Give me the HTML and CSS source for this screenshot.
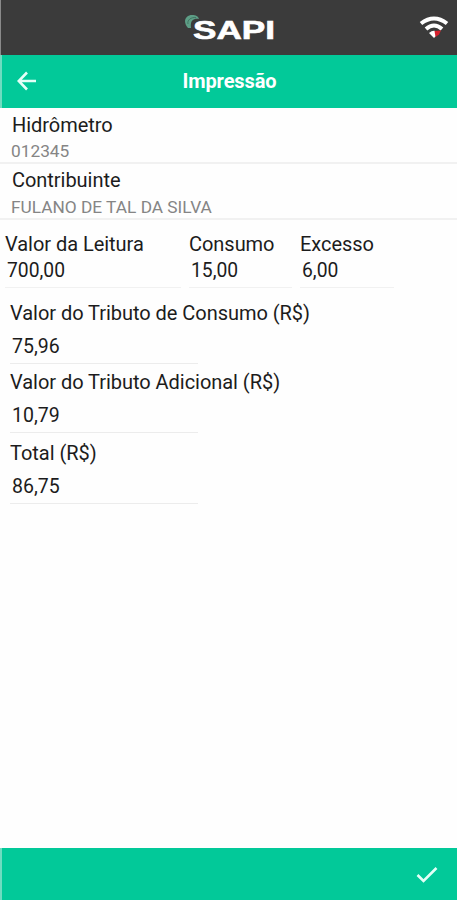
FILE: index.html
```
<!DOCTYPE html>
<html lang="pt-BR">
<head>
  <meta charset="UTF-8">
  <meta name="viewport" content="width=device-width, initial-scale=1.0">
  <title>SAPI - Impressão</title>
  <link rel="stylesheet" href="styles.css">
</head>
<body>

  <header class="topbar">
    <svg class="logo" width="96" height="34" viewBox="0 0 96 34">
      <path d="M5 18 C-1 11 3 5 9 5 C13 5 15 6 16 9 C10 8 7 11 8 18 Z" fill="#5d9e86"/>
      <path d="M5 14 C4 10 8 7 13 7.5" fill="none" stroke="#3b6b5a" stroke-width="0.8"/>
      <text class="logo-text" x="10" y="29" textLength="82" lengthAdjust="spacingAndGlyphs">SAPI</text>
    </svg>
    <svg class="wifi" width="30" height="24" viewBox="0 0 30 24">
      <path d="M2 7.5 Q15 -2.5 28 7.5" fill="none" stroke="#fff" stroke-width="4"/>
      <path d="M7 13 Q15 6 23 13" fill="none" stroke="#fff" stroke-width="4"/>
      <path d="M10 17 Q15 12.5 20 17 L15 22 Z" fill="#fff"/>
      <path d="M15.5 15 L22 14.5 L20 18.5 L16.5 21 Z" fill="#d5202c"/>
    </svg>
  </header>

  <nav class="titlebar">
    <svg class="back" width="20" height="20" viewBox="0 0 20 20">
      <path d="M19 10 H2 M10 1.5 L1.7 10 L10 18.5"/>
    </svg>
    <h1>Impressão</h1>
  </nav>

  <main>
    <div class="info">
      <label>Hidrômetro</label>
      <p>012345</p>
    </div>
    <div class="info contribuinte">
      <label>Contribuinte</label>
      <p>FULANO DE TAL DA SILVA</p>
    </div>

    <div class="leitura">
      <div class="campo">
        <label>Valor da Leitura</label>
        <p>700,00</p>
      </div>
      <div class="campo">
        <label>Consumo</label>
        <p>15,00</p>
      </div>
      <div class="campo">
        <label>Excesso</label>
        <p>6,00</p>
      </div>
    </div>

    <div class="valores">
      <div class="valor">
        <label>Valor do Tributo de Consumo (R$)</label>
        <p>75,96</p>
      </div>
      <div class="valor">
        <label>Valor do Tributo Adicional (R$)</label>
        <p>10,79</p>
      </div>
      <div class="valor total">
        <label>Total (R$)</label>
        <p>86,75</p>
      </div>
    </div>
  </main>

  <footer class="bottombar">
    <svg class="check" width="22" height="18" viewBox="0 0 22 18">
      <path d="M1.5 9 L7.5 15 L20.5 2"/>
    </svg>
  </footer>

</body>
</html>
```
FILE: styles.css
```
* {
  box-sizing: border-box;
}

body {
  margin: 0;
  height: 100vh;
  display: flex;
  flex-direction: column;
  font-family: Roboto, sans-serif;
  background: #fefefe;
  color: #1c1c1c;
}

h1, p {
  margin: 0;
}

label {
  display: block;
  white-space: nowrap;
  font-size: 20px;
  line-height: 24px;
  letter-spacing: -0.04px;
}

.topbar {
  height: 55px;
  display: flex;
  align-items: center;
  justify-content: flex-end;
  background: #3b3b3b;
  border-left: 1px solid #8a8a8a;
}

.logo {
  margin: 0 140px 2px 0;
}

.logo-text {
  font-family: "Liberation Sans", sans-serif;
  font-size: 25px;
  font-weight: bold;
  fill: #fff;
  stroke: #fff;
  stroke-width: 0.6px;
}

.wifi {
  margin-right: 8px;
}

.titlebar {
  height: 53px;
  display: grid;
  grid-template-columns: 1fr auto 1fr;
  align-items: center;
  padding-bottom: 2px;
  background: #02c999;
  border-left: 2px solid #6fdcc0;
}

.titlebar h1 {
  color: #fff;
  font-size: 20px;
  line-height: 24px;
  font-weight: bold;
  letter-spacing: -0.1px;
}

.back {
  margin-left: 15px;
}

.back path,
.check path {
  fill: none;
  stroke: #e4fff7;
  stroke-width: 2.6;
}

main {
  flex: 1;
}

.info {
  height: 56px;
  padding: 5px 12px 0;
  border-bottom: 2px solid #f1f1f1;
}

.contribuinte {
  height: 56px;
  padding-top: 4px;
}

.info p {
  margin: 3px 0 0 -1px;
  font-size: 17.3px;
  line-height: 22px;
  color: #858585;
}

.contribuinte p {
  margin-top: 4px;
}

.leitura {
  display: grid;
  grid-template-columns: 176px 103px 94px;
  column-gap: 8px;
  padding: 12px 0 0 5px;
}

.campo p {
  padding: 2px 0 3px 2px;
  font-size: 19.3px;
  line-height: 26px;
  border-bottom: 1px solid #f1f1f1;
}

.valores {
  padding: 13px 10px 0;
}

.valor {
  height: 69px;
}

.valor p {
  width: 188px;
  height: 39px;
  padding: 9px 0 0 2px;
  font-size: 19.5px;
  line-height: 26px;
  border-bottom: 1px solid #ececec;
}

.total {
  padding-top: 2px;
}

.bottombar {
  height: 52px;
  display: flex;
  align-items: center;
  justify-content: flex-end;
  padding: 2px 19px 0 0;
  background: #02c999;
  border-left: 2px solid #6fdcc0;
}
```
